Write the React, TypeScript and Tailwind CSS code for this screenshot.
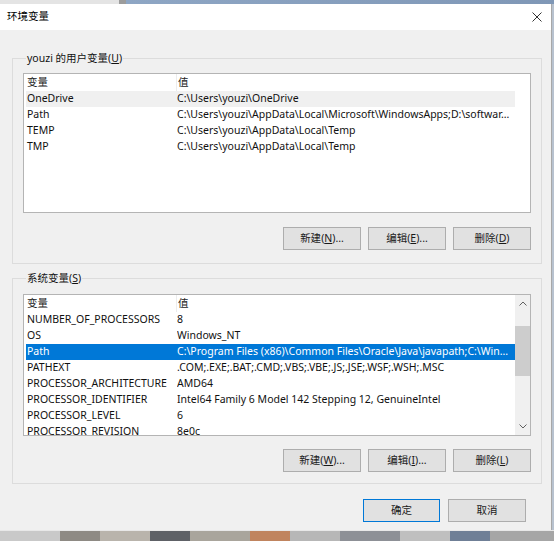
import React from "react";

type Row = [string, string];

const userRows: Row[] = [
  ["OneDrive", "C:\\Users\\youzi\\OneDrive"],
  ["Path", "C:\\Users\\youzi\\AppData\\Local\\Microsoft\\WindowsApps;D:\\softwar..."],
  ["TEMP", "C:\\Users\\youzi\\AppData\\Local\\Temp"],
  ["TMP", "C:\\Users\\youzi\\AppData\\Local\\Temp"],
];

const systemRows: Row[] = [
  ["NUMBER_OF_PROCESSORS", "8"],
  ["OS", "Windows_NT"],
  ["Path", "C:\\Program Files (x86)\\Common Files\\Oracle\\Java\\javapath;C:\\Win..."],
  ["PATHEXT", ".COM;.EXE;.BAT;.CMD;.VBS;.VBE;.JS;.JSE;.WSF;.WSH;.MSC"],
  ["PROCESSOR_ARCHITECTURE", "AMD64"],
  ["PROCESSOR_IDENTIFIER", "Intel64 Family 6 Model 142 Stepping 12, GenuineIntel"],
  ["PROCESSOR_LEVEL", "6"],
  ["PROCESSOR_REVISION", "8e0c"],
];

const font = "font-['Noto_Sans','Noto_Sans_CJK_SC',sans-serif]";

const Btn: React.FC<{ label: string; k?: string; tail?: string; primary?: boolean; w?: string }> = ({
  label,
  k,
  tail = "",
  primary,
  w = "w-[78px]",
}) => (
  <button
    className={`${w} h-[23px] flex items-center justify-center bg-[#e1e1e1] border text-[10.5px] text-[#1a1a1a] ${
      primary ? "border-[#0078d7]" : "border-[#adadad]"
    }`}
  >
    {label}
    {k && (
      <>
        (<span className="underline">{k}</span>)
      </>
    )}
    {tail}
  </button>
);

const ListBox: React.FC<{
  rows: Row[];
  selected: number;
  active: boolean;
  scroll?: boolean;
  h: string;
}> = ({ rows, selected, active, scroll, h }) => (
  <div className={`${h} border border-[#b4b4b4] bg-white flex overflow-hidden`}>
    <div className="flex-1 min-w-0 flex flex-col">
      <div className="h-[17px] flex items-center shrink-0 text-[10.5px] text-[#222]">
        <div className="w-[153px] pl-[3px] border-r border-[#ececec] h-full flex items-center">变量</div>
        <div className="pl-[1px]">值</div>
      </div>
      {rows.map(([name, value], i) => {
        const sel = i === selected;
        const bg = sel ? (active ? "bg-[#0078d7] text-white" : "bg-[#f0f0f0] text-[#111]") : "text-[#111]";
        return (
          <div
            key={name}
            className={`h-[16px] shrink-0 flex items-center text-[10.5px] whitespace-nowrap ml-[2px] ${
              scroll ? "" : "mr-[15px]"
            } ${bg}`}
          >
            <div className="w-[151px] pl-[1px] overflow-hidden">{name}</div>
            <div className="flex-1 overflow-hidden">{value}</div>
          </div>
        );
      })}
    </div>
    {scroll && (
      <div className="w-[15px] shrink-0 bg-[#f0f0f0] flex flex-col items-center">
        <div className="h-[17px] flex items-center justify-center">
          <svg width="8" height="5" viewBox="0 0 8 5" fill="none">
            <path d="M0.5 4.5 L4 1 L7.5 4.5" stroke="#606060" strokeWidth="1" />
          </svg>
        </div>
        <div className="mt-[14px] h-[50px] w-full bg-[#cdcdcd]"></div>
        <div className="flex-1"></div>
        <div className="h-[17px] flex items-center justify-center">
          <svg width="8" height="5" viewBox="0 0 8 5" fill="none">
            <path d="M0.5 0.5 L4 4 L7.5 0.5" stroke="#606060" strokeWidth="1" />
          </svg>
        </div>
      </div>
    )}
  </div>
);

const Group: React.FC<{
  title: React.ReactNode;
  rows: Row[];
  selected: number;
  active: boolean;
  scroll?: boolean;
  keys: [string, string, string];
  className?: string;
  listH: string;
  btnGap: string;
}> = ({ title, rows, selected, active, scroll, keys, className = "", listH, btnGap }) => (
  <fieldset className={`ml-[12px] w-[530px] min-w-0 border border-[#dcdcdc] px-[10px] ${className}`}>
    <legend className="ml-[3px] px-[1px] h-[16px] leading-[16px] text-[10.5px] text-[#111]">{title}</legend>
    <ListBox rows={rows} selected={selected} active={active} scroll={scroll} h={listH} />
    <div className={`${btnGap} flex justify-end gap-[7px]`}>
      <Btn label="新建" k={keys[0]} tail="..." />
      <Btn label="编辑" k={keys[1]} tail="..." />
      <Btn label="删除" k={keys[2]} />
    </div>
  </fieldset>
);

const App: React.FC = () => {
  return (
    <div className={`w-[554px] h-[541px] flex flex-col overflow-hidden bg-[#9aa9bc] ${font}`}>
      {/* desktop behind, top */}
      <div className="h-[4px] flex shrink-0">
        <div className="w-[119px] bg-[#e4e4e4]"></div>
        <div className="w-[7px] bg-[#9c9c9c]"></div>
        <div className="flex-1 bg-gradient-to-r from-[#8ea6c4] to-[#7f97b6]"></div>
      </div>

      <div className="flex flex-1 min-h-0">
        {/* dialog */}
        <div className="w-[552px] flex flex-col bg-[#f0f0f0] border-r border-[#a8a8a8]">
          <div className="h-[26px] bg-white flex items-center justify-between pl-[7px] pr-[9px] shrink-0">
            <span className="text-[10.5px] text-black">环境变量</span>
            <svg width="10" height="10" viewBox="0 0 10 10" fill="none">
              <path d="M0.5 0.5 L9.5 9.5 M9.5 0.5 L0.5 9.5" stroke="#333" strokeWidth="1" />
            </svg>
          </div>

          <div className="flex flex-col flex-1">
            <Group
              className="mt-[20px] pt-[7px] pb-[13px]"
              title={
                <>
                  youzi 的用户变量(<span className="underline">U</span>)
                </>
              }
              rows={userRows}
              selected={0}
              active={false}
              keys={["N", "E", "D"]}
              listH="h-[140px]"
              btnGap="mt-[14px]"
            />
            <Group
              className="mt-[6px] pt-[8px] pb-[11px]"
              title={
                <>
                  系统变量(<span className="underline">S</span>)
                </>
              }
              rows={systemRows}
              selected={2}
              active={true}
              scroll
              keys={["W", "I", "L"]}
              listH="h-[142px]"
              btnGap="mt-[13px]"
            />
            <div className="mt-[15px] flex justify-end gap-[8px] pr-[25px]">
              <Btn label="确定" primary w="w-[77px]" />
              <Btn label="取消" />
            </div>
          </div>
        </div>
        <div className="flex-1 bg-[#b8c2cf]"></div>
      </div>

      {/* desktop behind, bottom */}
      <div className="h-[11px] flex shrink-0 border-t border-[#e8e8e8]">
        <div className="w-[60px] bg-[#c9c9c9]"></div>
        <div className="w-[40px] bg-[#8e8a84]"></div>
        <div className="w-[50px] bg-[#b9b4ac]"></div>
        <div className="w-[40px] bg-[#5e6166]"></div>
        <div className="w-[60px] bg-[#a9a59c]"></div>
        <div className="w-[40px] bg-[#c0845e]"></div>
        <div className="w-[50px] bg-[#b7b7b7]"></div>
        <div className="w-[60px] bg-[#8d9096]"></div>
        <div className="w-[50px] bg-[#bfbfbf]"></div>
        <div className="w-[40px] bg-[#6f7f96]"></div>
        <div className="flex-1 bg-[#a6a6a6]"></div>
      </div>
    </div>
  );
};

export default App;
